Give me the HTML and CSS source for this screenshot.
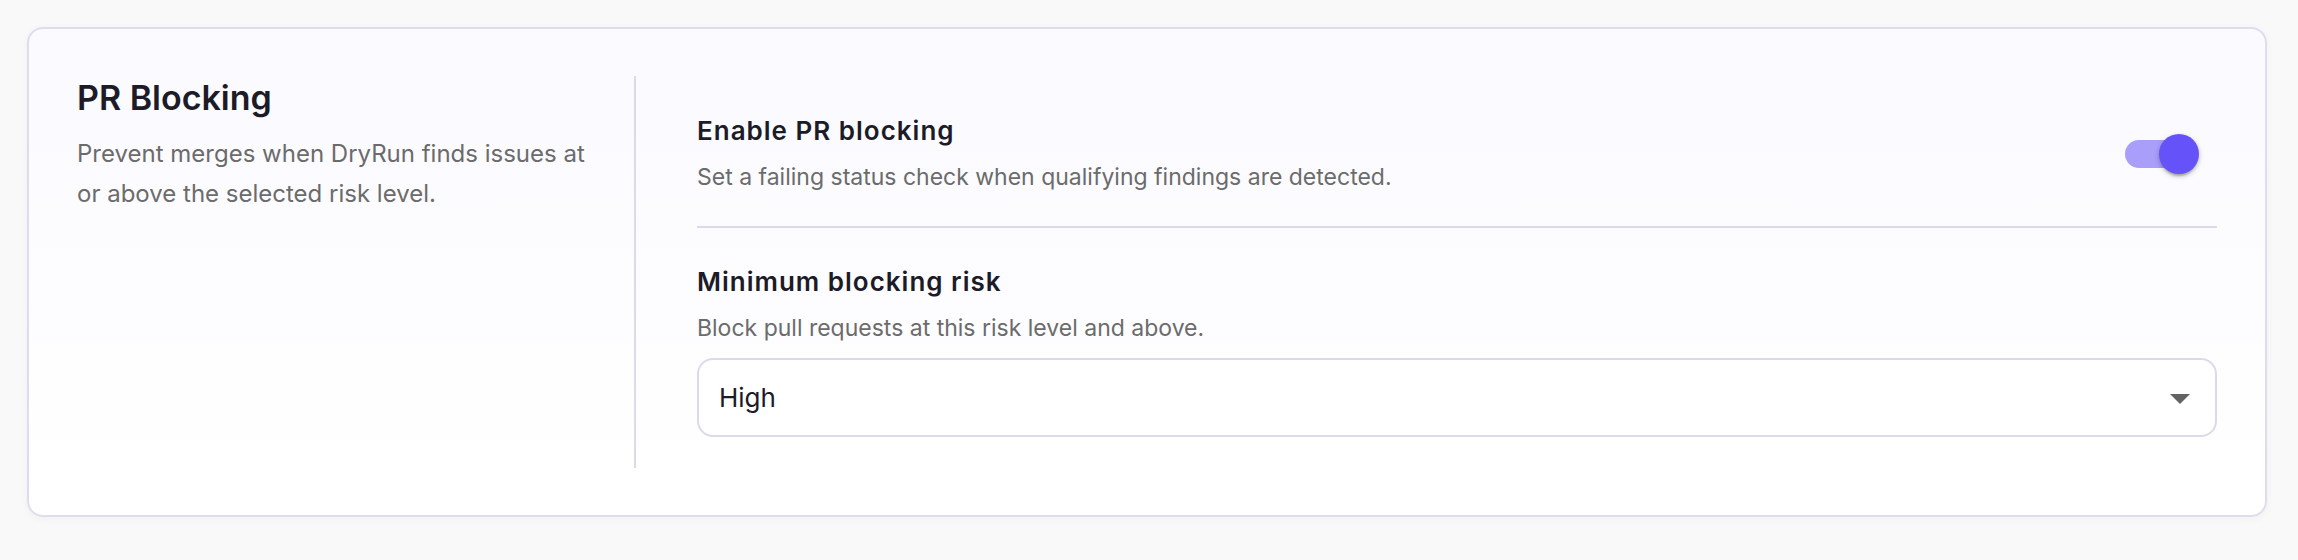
FILE: index.html
```html
<!DOCTYPE html>
<html lang="en">
<head>
<meta charset="utf-8">
<title>PR Blocking</title>
<link rel="stylesheet" href="styles.css">
</head>
<body>
  <section class="card">
    <div class="intro">
      <h2 class="title">PR Blocking</h2>
      <p class="desc">Prevent merges when DryRun finds issues at or above the selected risk level.</p>
    </div>
    <div class="settings">
      <div class="row row-toggle">
        <div class="row-text">
          <div class="label">Enable PR blocking</div>
          <div class="hint">Set a failing status check when qualifying findings are detected.</div>
        </div>
        <div class="switch" role="switch" aria-checked="true">
          <span class="switch-track"></span>
          <span class="switch-thumb"></span>
        </div>
      </div>
      <div class="row row-select">
        <div class="label">Minimum blocking risk</div>
        <div class="hint">Block pull requests at this risk level and above.</div>
        <div class="select">
          <span class="select-value">High</span>
          <svg class="select-icon" viewBox="0 0 24 24" aria-hidden="true"><path d="M7 10l5 5 5-5z"/></svg>
        </div>
      </div>
    </div>
  </section>
</body>
</html>
```
FILE: styles.css
```css
* { box-sizing: border-box; }
html, body { margin: 0; padding: 0; }
body {
  background: #f9f9f9;
  font-family: Inter, "Noto Sans", "Liberation Sans", sans-serif;
  color: #1c1b27;
  padding: 27px 31px 43px 27px;
}
.card {
  width: 2240px;
  height: 490px;
  border: 2px solid #dfdded;
  border-radius: 16px;
  background: linear-gradient(180deg, #fafaff 0%, #ffffff 100%);
  box-shadow: 0 2px 8px rgba(40, 30, 90, 0.04);
  padding: 47px 48px 47px 48px;
  display: flex;
}
.intro {
  width: 559px;
  flex: none;
  padding-right: 40px;
  border-right: 2px solid #dcdaea;
}
.title {
  margin: 2px 0 0 0;
  font-size: 34px;
  line-height: 40px;
  font-weight: 600;
  color: #1c1b27;
}
.desc {
  margin: 16px 0 0 0;
  font-size: 24px;
  line-height: 40px;
  color: #6b6b6b;
}
.settings {
  flex: 1;
  padding-left: 61px;
  display: flex;
  flex-direction: column;
}
.row-toggle {
  display: flex;
  align-items: center;
  justify-content: space-between;
  padding: 38px 0 32px 0;
  border-bottom: 2px solid #dcdaea;
}
.row-text { display: flex; flex-direction: column; gap: 12px; }
.label {
  font-size: 26px;
  line-height: 34px;
  font-weight: 600;
  letter-spacing: 1px;
  color: #1c1b27;
}
.hint {
  font-size: 23px;
  line-height: 34px;
  color: #6b6b6b;
}
.row-select { padding-top: 37px; display: flex; flex-direction: column; }
.row-select .hint { margin-top: 12px; }
.switch {
  position: relative;
  width: 116px;
  height: 76px;
  flex: none;
}
.switch-track {
  position: absolute;
  left: 24px;
  top: 24px;
  width: 68px;
  height: 28px;
  border-radius: 14px;
  background: #a99ffb;
}
.switch-thumb {
  position: absolute;
  left: 58px;
  top: 18px;
  width: 40px;
  height: 40px;
  border-radius: 50%;
  background: #6552f8;
  box-shadow: 0 4px 2px -2px rgba(0,0,0,0.2), 0 2px 4px 0 rgba(0,0,0,0.14), 0 2px 6px 0 rgba(0,0,0,0.12);
}
.select {
  margin-top: 13px;
  height: 79px;
  border: 2px solid #dcdaea;
  border-radius: 16px;
  background: #ffffff;
  display: flex;
  align-items: center;
  justify-content: space-between;
  padding: 0 11px 0 20px;
}
.select-value {
  font-size: 26px;
  line-height: 34px;
  color: #1c1b27;
}
.select-icon {
  width: 48px;
  height: 48px;
  fill: #636363;
}
```
